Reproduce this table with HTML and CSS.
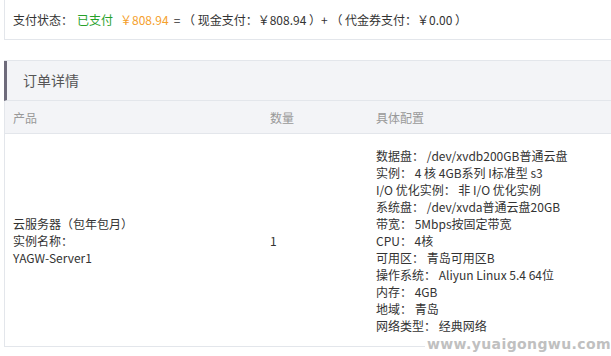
FILE: index.html
```html
<!DOCTYPE html>
<html lang="zh-CN">
<head>
<meta charset="utf-8">
<link rel="stylesheet" href="styles.css">
</head>
<body>
<div class="pay-box">
  <span>支付状态：</span><span class="paid">已支付</span><span class="amount">￥808.94</span><span class="calc">= （ 现金支付：￥808.94 ）+ （ 代金券支付：￥0.00 ）</span>
</div>
<div class="order">
  <div class="order-title">订单详情</div>
  <table class="order-table">
    <thead>
      <tr><th class="c1">产品</th><th class="c2">数量</th><th class="c3">具体配置</th></tr>
    </thead>
    <tbody>
      <tr>
        <td class="c1">云服务器（包年包月）<br>实例名称：<br>YAGW-Server1</td>
        <td class="c2">1</td>
        <td class="c3 config">
          <div>数据盘： /dev/xvdb200GB普通云盘</div>
          <div>实例： 4 核 4GB系列 I标准型 s3</div>
          <div>I/O 优化实例： 非 I/O 优化实例</div>
          <div>系统盘： /dev/xvda普通云盘20GB</div>
          <div>带宽： 5Mbps按固定带宽</div>
          <div>CPU： 4核</div>
          <div>可用区： 青岛可用区B</div>
          <div>操作系统： Aliyun Linux 5.4 64位</div>
          <div>内存： 4GB</div>
          <div>地域： 青岛</div>
          <div>网络类型： 经典网络</div>
        </td>
      </tr>
    </tbody>
  </table>
  <div class="watermark">www.yuaigongwu.com</div>
</div>
</body>
</html>
```
FILE: styles.css
```css
html, body {
  margin: 0;
  padding: 0;
  background: #fff;
}
body {
  font-family: "Noto Sans CJK SC", "Noto Sans", sans-serif;
  font-size: 12px;
  color: #333;
  width: 611px;
  height: 356px;
  overflow: hidden;
}
.pay-box {
  margin-left: 4px;
  height: 40px;
  box-sizing: border-box;
  border-left: 1px solid #e3e6eb;
  border-bottom: 1px solid #e3e6eb;
  padding-left: 8px;
  line-height: 40px;
  white-space: nowrap;
}
.paid {
  color: #27a12a;
  margin-left: 4px;
  margin-right: 7px;
}
.amount {
  color: #f5a02c;
  margin-right: 5px;
}
.order {
  position: relative;
  margin-top: 20px;
  margin-left: 4px;
  border-top: 1px solid #e3e6eb;
}
.order-title {
  height: 39px;
  line-height: 38px;
  background: #f3f4f7;
  border-left: 3px solid #6e6b7b;
  border-bottom: 1px solid #e3e6eb;
  padding-left: 16px;
  font-size: 14px;
  color: #555;
}
.order-table {
  width: 100%;
  border-collapse: collapse;
  border-left: 1px solid #e3e6eb;
}
.order-table th {
  background: #f3f4f7;
  color: #999;
  font-weight: normal;
  text-align: left;
  height: 32px;
  padding: 0 8px;
  border-bottom: 1px solid #e3e6eb;
}
.order-table td {
  vertical-align: middle;
  padding: 13px 8px 12px;
  line-height: 17px;
  border-bottom: 1px solid #e3e6eb;
}
.c1 { width: 241px; }
.c2 { width: 90px; }
.config {
  line-height: 16.8px;
}
.watermark {
  position: absolute;
  right: 0;
  bottom: -5px;
  font-family: "DejaVu Sans", sans-serif;
  font-weight: bold;
  font-size: 14px;
  letter-spacing: 0.4px;
  color: #c0c0c0;
  background: #fff;
  padding-left: 2px;
}
```
